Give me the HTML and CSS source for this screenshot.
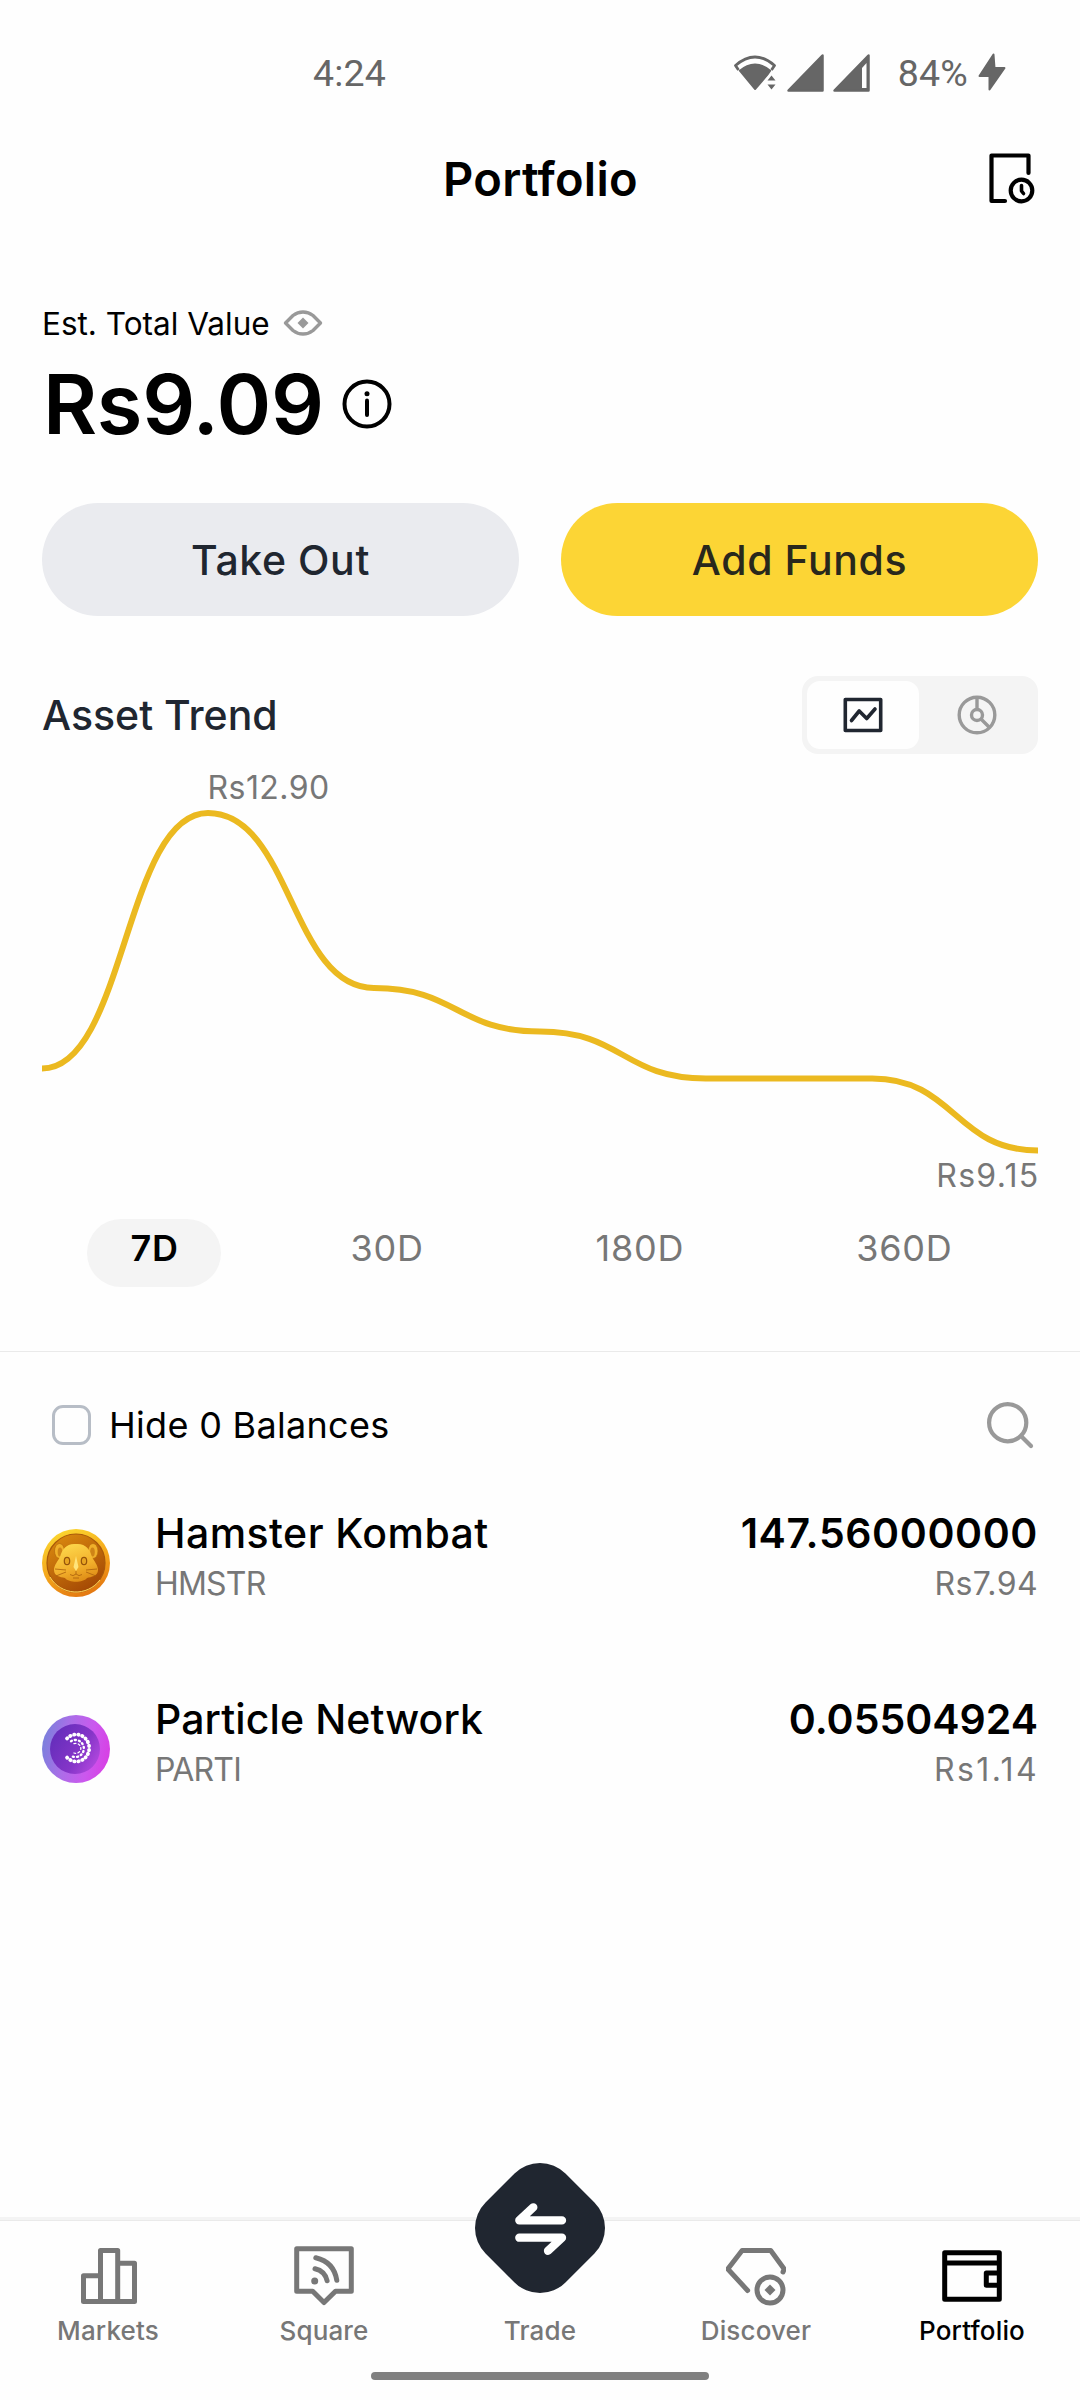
FILE: index.html
```html
<!DOCTYPE html>
<html lang="en">
<head>
    <meta charset="UTF-8">
    <meta name="viewport" content="width=device-width, initial-scale=1.0">
    <title>Portfolio</title>
    <link rel="stylesheet" href="styles.css">
</head>
<body>

    <div class="app">
        <div class="status-bar">
            <span class="time">4:24</span>
            <div class="status-icons">
                <svg class="wifi" width="42" height="36" viewBox="0 0 42 36">
                    <path d="M4.500 15L1.500 10.500Q21 -6.500 40.500 10.500L37.500 15" fill="none" stroke="#666" stroke-width="2.800" stroke-linejoin="round"/>
                    <path d="M4.500 15.500Q21 1.500 37.500 15.500L34 20.500L22 34.500Q21 35.500 20.200 34.500Z" fill="#666"/>
                    <path d="M31.500 36V24L37.500 17.500L42 22V36Z" fill="#fefefe"/>
                    <path d="M33.500 25.500L37.500 20.500L41.500 25.500ZM33.500 29.500L37.500 34.500L41.500 29.500Z" fill="#666"/>
                </svg>
                <svg class="signal" width="37" height="38" viewBox="0 0 37 38">
                    <path d="M35.500 1.500V36.500H1.500Z" fill="#666" stroke="#666" stroke-width="2.500" stroke-linejoin="round"/>
                </svg>
                <svg class="signal" width="37" height="38" viewBox="0 0 37 38">
                    <path d="M35.500 1.500V36.500H1.500Z" fill="#666" stroke="#666" stroke-width="2.500" stroke-linejoin="round"/>
                    <path d="M29 14L33.500 9V34H29Z" fill="#fefefe"/>
                </svg>
                <span class="battery">84%</span>
                <svg width="28" height="39" viewBox="0 0 28 39">
                    <path d="M15.500 1.500L1.500 23H11.500V36.500L26.500 15H16.500Z" fill="#666" stroke="#666" stroke-width="2" stroke-linejoin="round"/>
                </svg>
            </div>
        </div>

        <div class="header">
            <h1>Portfolio</h1>
            <svg width="50" height="54" viewBox="0 0 50 54" fill="none" stroke="#000" stroke-width="4.200" stroke-linecap="round" stroke-linejoin="round">
                <path d="M17 49H3.500V3.500H40.500V21"/>
                <circle cx="33.500" cy="38.500" r="10.800"/>
                <path d="M33.500 33.500V39L35.500 41.500" stroke-width="3.600"/>
            </svg>
        </div>

        <div class="content">
            <div class="total-label">
                <span>Est. Total Value</span>
                <svg width="40" height="26" viewBox="0 0 40 26">
                    <path d="M2.500 13L10 5.500C16 .8 24 .8 30 5.500L37.500 13L30 20.500C24 25.200 16 25.200 10 20.500Z" fill="none" stroke="#999" stroke-width="3.400" stroke-linejoin="round"/>
                    <path d="M20 7.500L25.500 13L20 18.500L14.500 13Z" fill="#999"/>
                </svg>
            </div>
            <div class="total-value">
                <span>Rs9.09</span>
                <svg width="50" height="50" viewBox="0 0 50 50">
                    <circle cx="25" cy="25" r="22.500" fill="none" stroke="#000" stroke-width="4"/>
                    <circle cx="25" cy="14.800" r="2.500"/>
                    <path d="M25 21.500V36" stroke="#000" stroke-width="4" stroke-linecap="round"/>
                </svg>
            </div>

            <div class="actions">
                <button class="take-out">Take Out</button>
                <button class="add-funds">Add Funds</button>
            </div>

            <div class="trend-header">
                <h2>Asset Trend</h2>
                <div class="toggle">
                    <div class="toggle-item active">
                        <svg width="40" height="40" viewBox="0 0 40 40" fill="none" stroke="#202630" stroke-width="3.600" stroke-linecap="round" stroke-linejoin="round">
                            <path d="M2.300 4.500H37.700V35.500H2.300Z"/>
                            <path d="M8.500 25.500L16.200 16L23.700 23.500L32 14"/>
                        </svg>
                    </div>
                    <div class="toggle-item">
                        <svg width="40" height="40" viewBox="0 0 40 40" fill="none" stroke="#999" stroke-width="3.400">
                            <circle cx="20" cy="20" r="17.800"/>
                            <circle cx="20" cy="20" r="5.500"/>
                            <path d="M20 2V14.500M24 24L32.500 32.500"/>
                        </svg>
                    </div>
                </div>
            </div>

            <svg class="chart" width="996" height="446" viewBox="0 0 996 446">
                <path d="M0 314.500C83 314.500 83 59 166 59S249 234 332 234S415 277.500 498 277.500S581 324.500 664 324.500H830C913 324.500 913 396.500 996 396.500" fill="none" stroke="#ebb920" stroke-width="6"/>
                <text class="high" x="165.500" y="45">Rs12.90</text>
                <text class="low" x="997.500" y="433" text-anchor="end">Rs9.15</text>
            </svg>

            <div class="tabs">
                <div class="tab selected">7D</div>
                <div class="tab">30D</div>
                <div class="tab">180D</div>
                <div class="tab">360D</div>
            </div>
        </div>

        <div class="divider"></div>

        <div class="content">
            <div class="filter">
                <span class="checkbox"></span>
                <span class="filter-text">Hide 0 Balances</span>
                <svg width="48" height="48" viewBox="0 0 48 48" fill="none" stroke="#999" stroke-width="4.200" stroke-linecap="round">
                    <circle cx="21.700" cy="21.700" r="18.600"/>
                    <path d="M35.500 35.500L45 45"/>
                </svg>
            </div>

            <div class="asset">
                <svg class="coin" width="68" height="68" viewBox="0 0 68 68">
                    <defs>
                        <linearGradient id="gold" x1="0.300" y1="0" x2="0.700" y2="1">
                            <stop offset="0" stop-color="#fbd630"/>
                            <stop offset="0.500" stop-color="#f5a81c"/>
                            <stop offset="1" stop-color="#e27410"/>
                        </linearGradient>
                        <linearGradient id="bronze" x1="0" y1="0" x2="0.600" y2="1">
                            <stop offset="0" stop-color="#df8f10"/>
                            <stop offset="1" stop-color="#a64b05"/>
                        </linearGradient>
                        <linearGradient id="fur" x1="0.300" y1="0" x2="0.700" y2="1">
                            <stop offset="0" stop-color="#fdd84c"/>
                            <stop offset="0.600" stop-color="#f2b02c"/>
                            <stop offset="1" stop-color="#dd8a14"/>
                        </linearGradient>
                    </defs>
                    <circle cx="34" cy="34" r="34" fill="url(#gold)"/>
                    <circle cx="34" cy="34" r="29" fill="url(#bronze)" stroke="#a9590a" stroke-width="1.200"/>
                    <path d="M8 48A30 30 0 0 0 58 51" fill="none" stroke="#ffd65c" stroke-width="1"/>
                    <ellipse cx="17.500" cy="22" rx="5" ry="7.500" fill="#f0b02a" stroke="#b5680c" stroke-width="0.700"/>
                    <ellipse cx="51" cy="22" rx="5" ry="7.500" fill="#f0b02a" stroke="#b5680c" stroke-width="0.700"/>
                    <ellipse cx="18" cy="23" rx="2.300" ry="4.500" fill="#cf8416"/>
                    <ellipse cx="50.500" cy="23" rx="2.300" ry="4.500" fill="#cf8416"/>
                    <path d="M34 15C43 14 48 20 50 28C52 32 56 36 56 41C56 47 49 48 45 49C41 54 27 54 23 49C18 48 12 47 12 41C12 36 16 32 18 28C20 20 25 14 34 15Z" fill="url(#fur)"/>
                    <ellipse cx="25" cy="32" rx="2.700" ry="3.700" fill="#e8a522" stroke="#95530a" stroke-width="1.200"/>
                    <ellipse cx="42" cy="32" rx="2.700" ry="3.700" fill="#e8a522" stroke="#95530a" stroke-width="1.200"/>
                    <path d="M34 27L31.500 38L34 42L36.500 38Z" fill="#ffe47a"/>
                    <path d="M34 42V45M28 45.500Q31 48 34 45Q37 48 40 45.500M24 41L13 40M24 43L14 47M44 41L55 40M44 43L54 47M31 49H37" fill="none" stroke="#a9600c" stroke-width="0.800"/>
                </svg>
                <div class="asset-name">
                    <div class="name">Hamster Kombat</div>
                    <div class="symbol">HMSTR</div>
                </div>
                <div class="asset-value">
                    <div class="amount">147.56000000</div>
                    <div class="fiat">Rs7.94</div>
                </div>
            </div>

            <div class="asset network">
                <svg class="coin" width="68" height="68" viewBox="0 0 68 68">
                    <defs>
                        <linearGradient id="rim" x1="0" y1="0.400" x2="1" y2="0.600">
                            <stop offset="0" stop-color="#7a80dc"/>
                            <stop offset="0.350" stop-color="#ab6ee8"/>
                            <stop offset="0.700" stop-color="#cb58ee"/>
                            <stop offset="1" stop-color="#d83fe4"/>
                        </linearGradient>
                        <linearGradient id="core" x1="0" y1="0.200" x2="1" y2="0.800">
                            <stop offset="0" stop-color="#622dba"/>
                            <stop offset="0.600" stop-color="#8535c8"/>
                            <stop offset="1" stop-color="#b64ae0"/>
                        </linearGradient>
                    </defs>
                    <circle cx="34" cy="34" r="34" fill="url(#rim)"/>
                    <circle cx="33" cy="34" r="25" fill="url(#core)"/>
                    <g fill="none" stroke="#fff" stroke-linecap="round">
                        <path d="M25 23.500A13 13.500 0 1 1 25 42.500" stroke-width="3.800" stroke-dasharray="0.300 3.800"/>
                        <path d="M29 26.200A8.500 8.500 0 1 1 29 40.800" stroke-width="2.400" stroke-dasharray="1 3"/>
                        <path d="M32 28.700A5 5 0 1 1 32 38" stroke-width="1.300" stroke-dasharray="2 2.400"/>
                    </g>
                </svg>
                <div class="asset-name">
                    <div class="name">Particle Network</div>
                    <div class="symbol">PARTI</div>
                </div>
                <div class="asset-value">
                    <div class="amount">0.05504924</div>
                    <div class="fiat">Rs1.14</div>
                </div>
            </div>
        </div>

        <div class="nav">
            <div class="nav-items">
                <div class="nav-item">
                    <svg width="60" height="60" viewBox="0 0 60 60">
                        <path d="M22.500 29.700H5.500V55.500H56.500V17.200H39.700M22.500 55.500V4.500H39.700V55.500"/>
                    </svg>
                    <span>Markets</span>
                </div>
                <div class="nav-item">
                    <svg width="60" height="60" viewBox="0 0 60 60">
                        <path d="M2.700 2.700H57.300V45.300H41.500L30 56.500L18.700 45.300H2.700Z"/>
                        <path d="M21 22.700Q31 25 33.100 34.700M21.800 11.700Q40 16 42.800 34.300"/>
                        <circle class="solid" cx="20.700" cy="35" r="3.500"/>
                    </svg>
                    <span>Square</span>
                </div>
                <div class="nav-item">
                    <svg class="trade-button" width="130" height="130" viewBox="0 0 130 130">
                        <rect class="diamond" x="8.500" y="8.500" width="113" height="113" rx="36" transform="rotate(45 65 65)"/>
                        <path d="M58.300 44.300L44.300 57.400H87M44.300 74.700H87L73 87.800"/>
                    </svg>
                    <span>Trade</span>
                </div>
                <div class="nav-item">
                    <svg width="60" height="60" viewBox="0 0 60 60">
                        <path d="M21.600 44.500L1.800 23L16.100 4.500H44.700L58.200 23L57 26"/>
                        <circle cx="44" cy="44" r="13"/>
                        <path class="solid" d="M44 38.500L49.500 44L44 49.500L38.500 44Z"/>
                    </svg>
                    <span>Discover</span>
                </div>
                <div class="nav-item current">
                    <svg width="60" height="60" viewBox="0 0 60 60">
                        <path d="M2.700 6.700H57.300V53.300H2.700ZM2.700 17H57.300M57.300 27H44.300V39.300H57.300"/>
                    </svg>
                    <span>Portfolio</span>
                </div>
            </div>
            <div class="home-indicator"></div>
        </div>
    </div>

</body>
</html>
```
FILE: styles.css
```css
/* General Styles */
* {
    box-sizing: border-box;
}

body {
    margin: 0;
    background: #fff;
    color: #000;
    font-family: 'Inter', sans-serif;
}

svg {
    display: block;
    flex-shrink: 0;
}

h1, h2 {
    margin: 0;
}

.app {
    width: 1080px;
    height: 2400px;
    display: flex;
    flex-direction: column;
    background: #fefefe;
}

/* Status bar */
.status-bar {
    height: 145px;
    padding: 0 74px 0 313px;
    display: flex;
    align-items: center;
    justify-content: space-between;
    font-family: 'Roboto', sans-serif;
    font-size: 37.5px;
    color: #666;
}

.time {
    letter-spacing: 0.2px;
}

.status-icons {
    display: flex;
    align-items: center;
}

.wifi {
    margin-right: 11px;
}

.signal {
    margin-right: 9px;
}

.battery {
    margin: 0 10px 0 19px;
    letter-spacing: 0.2px;
}

/* Header */
.header {
    height: 68px;
    padding: 0 42px 0 43px;
    display: grid;
    grid-template-columns: 1fr auto 1fr;
    align-items: center;
}

.header h1 {
    grid-column: 2;
    font-size: 47px;
    font-weight: 600;
    line-height: 68px;
    letter-spacing: 0.3px;
}

.header svg {
    justify-self: end;
}

.content {
    padding: 0 42px;
}

/* Total value */
.total-label {
    height: 40px;
    margin-top: 90px;
    display: flex;
    align-items: center;
    gap: 13px;
    font-size: 31.5px;
}

.total-value {
    height: 100px;
    margin-top: 11px;
    padding-left: 1px;
    display: flex;
    align-items: center;
    gap: 18px;
    font-size: 83px;
    font-weight: 600;
    letter-spacing: -0.3px;
}

/* Buttons */
.actions {
    margin-top: 49px;
    display: grid;
    grid-template-columns: 1fr 1fr;
    gap: 42px;
}

.actions button {
    height: 113px;
    padding: 0;
    border: none;
    border-radius: 57px;
    font-family: inherit;
    font-size: 41px;
    font-weight: 500;
    letter-spacing: 0.6px;
    color: #202630;
}

.actions .take-out {
    background: #eaebef;
}

.actions .add-funds {
    background: #fcd535;
    color: #29281c;
}

/* Asset trend */
.trend-header {
    margin-top: 60px;
    display: flex;
    align-items: center;
    justify-content: space-between;
}

.trend-header h2 {
    font-size: 41px;
    font-weight: 500;
    color: #202630;
}

.toggle {
    width: 236px;
    height: 78px;
    padding: 5px 4px 5px 5px;
    display: flex;
    border-radius: 16px;
    background: #f4f4f4;
}

.toggle-item {
    flex: 1;
    display: flex;
    align-items: center;
    justify-content: center;
    border-radius: 13px;
}

.toggle-item.active {
    flex: none;
    width: 112px;
    background: #fefefe;
}

.chart text {
    font-size: 32px;
    fill: #777;
}

.chart .high {
    letter-spacing: 0.45px;
}

.chart .low {
    letter-spacing: 1.3px;
}

/* Range tabs */
.tabs {
    margin-top: 19px;
    padding-left: 2px;
    display: flex;
    justify-content: space-around;
}

.tab {
    height: 68px;
    padding: 0 42px 0 43px;
    border-radius: 34px;
    font-size: 36px;
    line-height: 58px;
    letter-spacing: 0.8px;
    color: #777;
}

.tab.selected {
    background: #f4f4f4;
    color: #000;
    font-weight: 600;
}

.divider {
    height: 1px;
    margin-top: 64px;
    background: #eaeaea;
}

/* Balances */
.filter {
    height: 60px;
    margin-top: 43px;
    padding: 0 4px 0 10px;
    display: flex;
    align-items: center;
}

.checkbox {
    width: 39px;
    height: 40px;
    border: 3px solid #b7bdc6;
    border-radius: 11px;
}

.filter-text {
    flex: 1;
    margin-left: 18px;
    font-size: 36px;
    letter-spacing: 0.3px;
}

.asset {
    height: 186px;
    padding-top: 38px;
    display: flex;
    align-items: flex-start;
}

.filter + .asset {
    margin-top: 15px;
}

.coin {
    margin-top: 21px;
}

.asset-name {
    flex: 1;
    margin-left: 45px;
}

.asset-value {
    text-align: right;
}

.name, .amount {
    font-size: 41px;
    font-weight: 500;
    line-height: 50px;
    letter-spacing: 0.45px;
}

.amount {
    font-weight: 600;
    letter-spacing: 0.6px;
}

.symbol, .fiat {
    font-size: 32px;
    line-height: 51px;
    letter-spacing: 0.4px;
    color: #777;
}

.symbol {
    letter-spacing: -0.8px;
}

.network .name {
    letter-spacing: 0.1px;
}

.network .amount {
    letter-spacing: 0;
}

.network .fiat {
    margin-right: -1px;
    letter-spacing: 2.4px;
}

/* Bottom navigation */
.nav {
    height: 183px;
    margin-top: auto;
    border-top: 3px solid #f4f4f4;
}

.nav-items {
    display: flex;
    border-top: 1px solid #eaeaea;
}

.nav-item {
    position: relative;
    flex: 1;
    padding-top: 25px;
    display: flex;
    flex-direction: column;
    align-items: center;
    justify-content: flex-end;
    color: #777;
}

.nav-item svg {
    fill: none;
    stroke: currentColor;
    stroke-width: 5;
    stroke-linecap: round;
    stroke-linejoin: round;
}

.nav-item .solid {
    fill: currentColor;
    stroke: none;
}

.nav-item span {
    margin-top: 9px;
    font-size: 26px;
    font-weight: 500;
    line-height: 32px;
    letter-spacing: 0.15px;
}

.nav-item.current {
    color: #000;
}

.nav-item .trade-button {
    position: absolute;
    top: -58px;
    left: 43px;
    stroke: #fff;
    stroke-width: 8.3;
}

.trade-button .diamond {
    fill: #202630;
    stroke: none;
}

.home-indicator {
    width: 338px;
    height: 8px;
    margin: 25px auto 0;
    border-radius: 4px;
    background: #808080;
}
```
